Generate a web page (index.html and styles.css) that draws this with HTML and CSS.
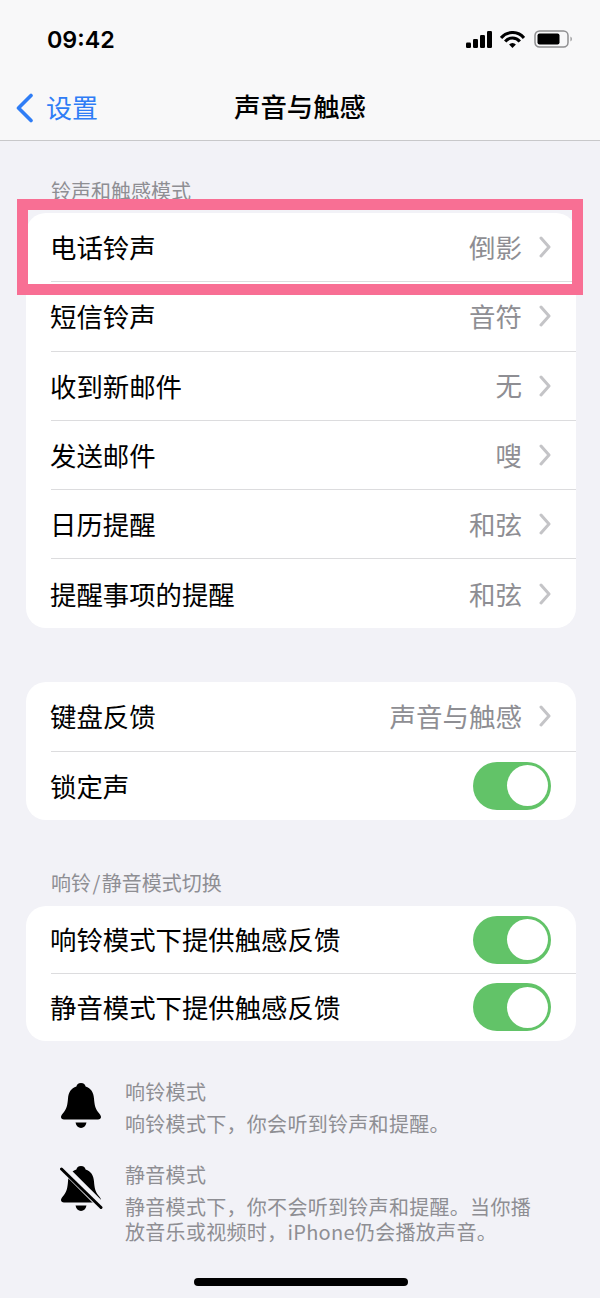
FILE: index.html
```html
<!DOCTYPE html>
<html lang="zh-CN">
  <head>
    <meta charset="utf-8">
    <title>声音与触感</title>
    <link rel="stylesheet" href="styles.css">
  </head>
  <body>
    <div class="screen">
      <header class="top">
        <div class="status">
          <span class="time">09:42</span>
          <div class="status-icons">
            <svg class="signal" width="26" height="17" viewBox="0 0 26 17"><rect x="0" y="11.5" width="5" height="5.5" rx="1.2"/><rect x="7" y="8" width="5" height="9" rx="1.2"/><rect x="14" y="4" width="5" height="13" rx="1.2"/><rect x="21" y="0" width="5" height="17" rx="1.2"/></svg>
            <svg class="wifi" width="25" height="17" viewBox="0 0 25 17"><path d="M1 6.900A15 15 0 0 1 24 6.900M5.200 10.400A9.500 9.500 0 0 1 19.800 10.400" fill="none" stroke="#000" stroke-width="3.100"/><path d="M9.100 13.600A4.600 4.600 0 0 1 15.900 13.600L12.500 17Z"/></svg>
            <svg class="battery" width="39" height="18" viewBox="0 0 39 18"><rect x="1" y="1" width="33" height="16" rx="4.500" fill="none" stroke="#8e8e90" stroke-width="1.500"/><rect x="3.500" y="3.500" width="22" height="11" rx="2"/><path d="M36.500 6.500a3 3 0 0 1 0 5z" fill="#8e8e90"/></svg>
          </div>
        </div>
        <nav class="navbar">
          <a class="back">
            <svg width="19" height="30" viewBox="0 0 19 30"><path d="M16 2.500 3.500 15 16 27.500" fill="none" stroke="#2f7df6" stroke-width="3.600" stroke-linecap="round" stroke-linejoin="round"/></svg>
            <span>设置</span>
          </a>
          <h1>声音与触感</h1>
        </nav>
      </header>

      <main class="content">
        <h2 class="section-label first">铃声和触感模式</h2>
        <section class="card">
          <div class="row"><span class="name">电话铃声</span><span class="value">倒影</span><svg class="chev" width="12" height="22" viewBox="0 0 12 22"><path d="M2 2l8 9-8 9"/></svg></div>
          <div class="row"><span class="name">短信铃声</span><span class="value">音符</span><svg class="chev" width="12" height="22" viewBox="0 0 12 22"><path d="M2 2l8 9-8 9"/></svg></div>
          <div class="row"><span class="name">收到新邮件</span><span class="value">无</span><svg class="chev" width="12" height="22" viewBox="0 0 12 22"><path d="M2 2l8 9-8 9"/></svg></div>
          <div class="row"><span class="name">发送邮件</span><span class="value">嗖</span><svg class="chev" width="12" height="22" viewBox="0 0 12 22"><path d="M2 2l8 9-8 9"/></svg></div>
          <div class="row"><span class="name">日历提醒</span><span class="value">和弦</span><svg class="chev" width="12" height="22" viewBox="0 0 12 22"><path d="M2 2l8 9-8 9"/></svg></div>
          <div class="row"><span class="name">提醒事项的提醒</span><span class="value">和弦</span><svg class="chev" width="12" height="22" viewBox="0 0 12 22"><path d="M2 2l8 9-8 9"/></svg></div>
        </section>

        <section class="card second">
          <div class="row"><span class="name">键盘反馈</span><span class="value">声音与触感</span><svg class="chev" width="12" height="22" viewBox="0 0 12 22"><path d="M2 2l8 9-8 9"/></svg></div>
          <div class="row"><span class="name">锁定声</span><span class="toggle"></span></div>
        </section>

        <h2 class="section-label switch-label">响铃 / 静音模式切换</h2>
        <section class="card compact">
          <div class="row"><span class="name">响铃模式下提供触感反馈</span><span class="toggle"></span></div>
          <div class="row"><span class="name">静音模式下提供触感反馈</span><span class="toggle"></span></div>
        </section>

        <div class="legend">
          <svg class="bell" width="44" height="46" viewBox="0 0 44 46"><path d="M22 0c2.800 0 4.300 1.600 4.600 3.600C32 5.200 34.500 9.500 35 15.500c.5 6 1 9.500 4 13.500 1.800 2.200 3 3.700 3 5 0 1.500-1.200 2.500-3 2.500H5c-1.800 0-3-1-3-2.500 0-1.300 1.200-2.800 3-5 3-4 3.500-7.500 4-13.500C9.500 9.500 12 5.200 17.400 3.600 17.700 1.600 19.200 0 22 0z"/><path d="M16.500 39.500h11c-.6 3.300-2.700 5.500-5.500 5.500s-4.900-2.200-5.500-5.500z"/></svg>
          <div class="legend-text">
            <h3>响铃模式</h3>
            <p>响铃模式下，你会听到铃声和提醒。</p>
          </div>
        </div>
        <div class="legend">
          <svg class="bell" width="44" height="46" viewBox="0 0 44 46"><path d="M22 0c2.800 0 4.300 1.600 4.600 3.600C32 5.200 34.500 9.500 35 15.500c.5 6 1 9.500 4 13.500 1.800 2.200 3 3.700 3 5 0 1.500-1.200 2.500-3 2.500H5c-1.800 0-3-1-3-2.500 0-1.300 1.200-2.800 3-5 3-4 3.500-7.500 4-13.500C9.500 9.500 12 5.200 17.400 3.600 17.700 1.600 19.200 0 22 0z"/><path d="M16.500 39.500h11c-.6 3.300-2.700 5.500-5.500 5.500s-4.900-2.200-5.500-5.500z"/><path d="M3.500 1 45 42.500" stroke="#f2f2f7" stroke-width="8"/><path d="M2.500 3 42 41.500" stroke="#000" stroke-width="3" stroke-linecap="round"/></svg>
          <div class="legend-text">
            <h3>静音模式</h3>
            <p>静音模式下，你不会听到铃声和提醒。当你播放音乐或视频时，iPhone仍会播放声音。</p>
          </div>
        </div>
      </main>

      <div class="home-bar"></div>
      <div class="highlight"></div>
    </div>
  </body>
</html>
```

FILE: styles.css
```css
* {
  box-sizing: border-box;
}

body {
  margin: 0;
  background: #f2f2f7;
  font-family: "Noto Sans CJK SC", "Liberation Sans", sans-serif;
  color: #000;
}

.screen {
  position: relative;
  width: 600px;
  height: 1298px;
  overflow: hidden;
}

.top {
  height: 141px;
  background: #f8f8f9;
  border-bottom: 1px solid #c8c8ca;
}

.status {
  display: flex;
  justify-content: space-between;
  align-items: center;
  height: 78px;
  padding: 0 27px 0 47px;
}

.time {
  padding-top: 1px;
  font-family: Inter, sans-serif;
  font-size: 23.300px;
  font-weight: 600;
}

.status-icons {
  display: flex;
  align-items: center;
  gap: 8px;
}

.battery {
  margin-left: 1px;
}

.navbar {
  position: relative;
  display: flex;
  justify-content: center;
  align-items: center;
  height: 56px;
}

.navbar h1 {
  margin: 0;
  font-size: 26.400px;
  font-weight: 500;
  line-height: 1;
}

.back {
  position: absolute;
  left: 15px;
  top: 13px;
  display: flex;
  align-items: center;
  gap: 12px;
  color: #2f7df6;
  font-size: 26px;
  line-height: 30px;
}

.back svg {
  margin-top: 2px;
}

.section-label {
  margin: 0;
  padding: 0 51px;
  height: 23px;
  font-size: 20px;
  font-weight: 400;
  line-height: 23px;
  color: #8e8e93;
}

.section-label.first {
  margin-top: 38px;
  margin-bottom: 11px;
}

.section-label.switch-label {
  margin-top: 51px;
  margin-bottom: 12px;
  word-spacing: -3px;
}

.card {
  margin: 0 24px 0 26px;
  background: #fff;
  border-radius: 20px;
  overflow: hidden;
}

.card.second {
  margin-top: 54px;
}

.card.compact {
  margin-bottom: 38px;
}

.row {
  display: flex;
  align-items: center;
  height: 69.300px;
  margin-left: 25px;
  padding-right: 25px;
  border-bottom: 1px solid #dcdcde;
}

.row:last-child {
  height: 68.800px;
  border-bottom: 0;
}

.card.compact .row {
  height: 67.300px;
}

.name {
  flex: 1;
  margin-left: -1px;
  font-size: 26.400px;
  line-height: 1;
}

.value {
  font-size: 26.500px;
  line-height: 1;
  color: #8e8e93;
}

.chev {
  margin-left: 17px;
  fill: none;
  stroke: #c4c4c7;
  stroke-width: 3;
  stroke-linecap: round;
  stroke-linejoin: round;
}

.toggle {
  position: relative;
  width: 78px;
  height: 48px;
  border-radius: 24px;
  background: #62c368;
}

.toggle::after {
  content: "";
  position: absolute;
  top: 3.500px;
  right: 3px;
  width: 41px;
  height: 41px;
  border-radius: 50%;
  background: #fff;
}

.legend {
  display: flex;
  margin-bottom: 26px;
  padding-left: 59px;
}

.bell {
  flex: none;
  margin-top: 4px;
}

.legend-text {
  margin-left: 22px;
  width: 412px;
  color: #8e8e93;
}

.legend-text h3 {
  margin: 0 0 7px;
  font-size: 20px;
  font-weight: 400;
  line-height: 25px;
  letter-spacing: 0.300px;
}

.legend-text p {
  margin: 0;
  font-size: 20px;
  line-height: 25px;
  letter-spacing: 0.300px;
}

.home-bar {
  position: absolute;
  left: 194px;
  bottom: 12px;
  width: 214px;
  height: 8px;
  border-radius: 4px;
  background: #000;
}

/* annotation drawn on top of the first row */
.highlight {
  position: absolute;
  left: 17px;
  top: 199px;
  width: 566px;
  height: 96px;
  border: 11px solid #f86f94;
}
```
